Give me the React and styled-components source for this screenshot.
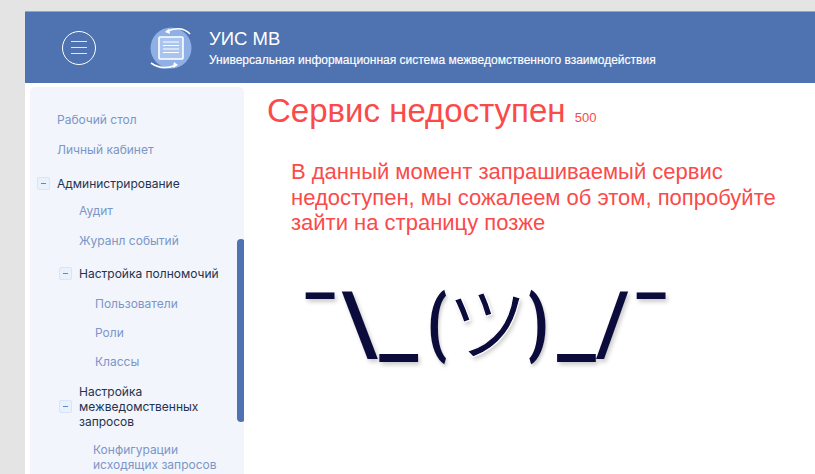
import React from 'react';
import styled, { createGlobalStyle } from 'styled-components';

const Global = createGlobalStyle`
  html, body { margin: 0; padding: 0; height: 100%; overflow: hidden; background: #e4e4e4; }
  body { font-family: "Liberation Sans", Arial, sans-serif; }
  #root { height: 100%; }
`;
const Page = styled.div`
  height: 474px; box-sizing: border-box; padding: 11px 0 0 25px; overflow: hidden;
`;
const Frame = styled.div`
  background: #fff; height: 463px; display: flex; flex-direction: column; overflow: hidden;
`;
const Header = styled.header`
  flex: none; height: 72px; background: #4f72b0; border-top: 1px solid #8fa5cc; box-sizing: border-box;
  display: flex; align-items: center; color: #fff;
`;
const Burger = styled.button`
  margin-left: 37px; width: 34px; height: 34px; padding: 0; border: 1px solid #fff; border-radius: 50%;
  background: none; display: flex; flex-direction: column; justify-content: center; align-items: center; gap: 5px; flex: none;
  span { display: block; width: 16px; height: 1px; background: #dfe6f2; }
`;
const Logo = styled.svg`
  margin-left: 53px; flex: none;
`;
const Brand = styled.div`
  margin-left: 16px; display: flex; flex-direction: column;
`;
const BrandTitle = styled.div`
  font-size: 18.5px; line-height: 22px;
`;
const BrandSub = styled.div`
  font-size: 12px; line-height: 14px; margin-top: 3px; -webkit-text-stroke: 0.15px #fff;
`;
const Body = styled.div`
  flex: 1; display: flex; min-height: 0;
`;
const Sidebar = styled.nav`
  position: relative; flex: none; width: 214px; margin: 4px 0 0 5px; background: #f2f5fb; border-radius: 5px 5px 0 0;
  padding-top: 25px; box-sizing: border-box; overflow: hidden; font-family: Inter, sans-serif; font-size: 12px;
`;
const Thumb = styled.div`
  position: absolute; left: 207px; top: 152px; width: 8px; height: 183px; border-radius: 4px; background: #4f72b0;
`;
const Row = styled.div`
  display: flex; align-items: center; box-sizing: border-box;
  padding-left: ${p => p.$indent}px; margin-top: ${p => p.$top}px; line-height: 15px;
  color: ${p => (p.$dark ? '#25324f' : '#7b96c8')};
`;
const Label = styled.span`
  width: ${p => (p.$wrap ? '140px' : 'auto')};
`;
const Toggle = styled.span`
  flex: none; box-sizing: border-box; width: 13px; height: 13px; margin-right: 7px; margin-left: -20px;
  border: 1px solid #d6e5fc; border-radius: 2px; background: #e9f1fd;
  display: flex; align-items: center; justify-content: center;
  &::before { content: ''; width: 5px; height: 1.5px; background: #5f86c4; }
`;
const Main = styled.main`
  flex: 1; min-width: 0; padding: 8px 0 0 23px; color: #fb4a4a;
`;
const Title = styled.h1`
  margin: 0; font-weight: 400; font-size: 33px; line-height: 40px; white-space: nowrap;
  small { font-size: 13px; }
`;
const Message = styled.p`
  margin: 21px 0 0 24px; width: 500px; font-size: 22px; line-height: 25.5px;
`;
const Shrug = styled.div`
  margin: 33px 0 0 32px; color: #0c0c3c; font-size: 87px; line-height: 110px; font-weight: 500; white-space: nowrap;
  font-family: Roboto, sans-serif; text-shadow: 2px 3px 4px rgba(0,0,0,.2);
`;
const Kana = styled.span`
  font-family: "Noto Sans CJK JP", sans-serif; font-weight: 400; font-size: 82px; line-height: 1;
  -webkit-text-stroke: 1.2px #fff;
`;
const Paren = styled.span`
  display: inline-block; font-size: 75px; line-height: 1; font-weight: 900; vertical-align: 6px;
  transform: scaleX(0.75); margin: ${p => (p.$open ? '0 -4px 0 6px' : '0 4px 0 -4px')};
`;
const Bar = styled.span`
  margin-left: 2px;
`;

const items = [
  { t: 'Рабочий стол', i: 27, top: 0 },
  { t: 'Личный кабинет', i: 27, top: 15 },
  { t: 'Администрирование', i: 27, top: 19, dark: 1, tg: 1 },
  { t: 'Аудит', i: 49, top: 12 },
  { t: 'Журанл событий', i: 49, top: 15 },
  { t: 'Настройка полномочий', i: 49, top: 18, dark: 1, tg: 1 },
  { t: 'Пользователи', i: 65, top: 15 },
  { t: 'Роли', i: 65, top: 14 },
  { t: 'Классы', i: 65, top: 14 },
  { t: 'Настройка межведомственных запросов', i: 49, top: 15, dark: 1, tg: 1, wrap: 1 },
  { t: 'Конфигурации исходящих запросов', i: 63, top: 13, wrap: 1 },
];

export default function App() {
  return (
    <Page>
      <Global />
      <Frame>
        <Header>
          <Burger aria-label="Меню"><span /><span /><span /></Burger>
          <Logo width="44" height="44" viewBox="0 0 44 44" fill="none">
            <circle cx="22" cy="22" r="20.5" fill="#8eb0e6" />
            <rect x="10" y="11" width="24" height="22" rx="1" fill="#a9c4ee" stroke="#fff" strokeWidth="1.6" />
            <path d="M14 16h16M14 19.5h16M14 23h16M14 26.5h16" stroke="#fff" strokeWidth="1.2" />
            <path d="M18 5.5C26 1 35 2 41 8" stroke="#fff" strokeWidth="1.6" />
            <path d="M20 2.5l-4 3.5 5 2" fill="#fff" />
            <path d="M2 37c7 5 16 6 25 2" stroke="#fff" strokeWidth="1.6" />
            <path d="M25 36l4 3-5 3" fill="#fff" />
          </Logo>
          <Brand>
            <BrandTitle>УИС МВ</BrandTitle>
            <BrandSub>Универсальная информационная система межведомственного взаимодействия</BrandSub>
          </Brand>
        </Header>
        <Body>
          <Sidebar>
            {items.map(it => (
              <Row key={it.t} $indent={it.i} $top={it.top} $dark={it.dark}>
                {it.tg ? <Toggle /> : null}
                <Label $wrap={it.wrap}>{it.t}</Label>
              </Row>
            ))}
            <Thumb />
          </Sidebar>
          <Main>
            <Title>Сервис недоступен <small>500</small></Title>
            <Message>В данный момент запрашиваемый сервис недоступен, мы сожалеем об этом, попробуйте зайти на страницу позже</Message>
            <Shrug>¯\<Bar>_</Bar><Paren $open>(</Paren><Kana>ツ</Kana><Paren>)</Paren><Bar>_</Bar>/¯</Shrug>
          </Main>
        </Body>
      </Frame>
    </Page>
  );
}
